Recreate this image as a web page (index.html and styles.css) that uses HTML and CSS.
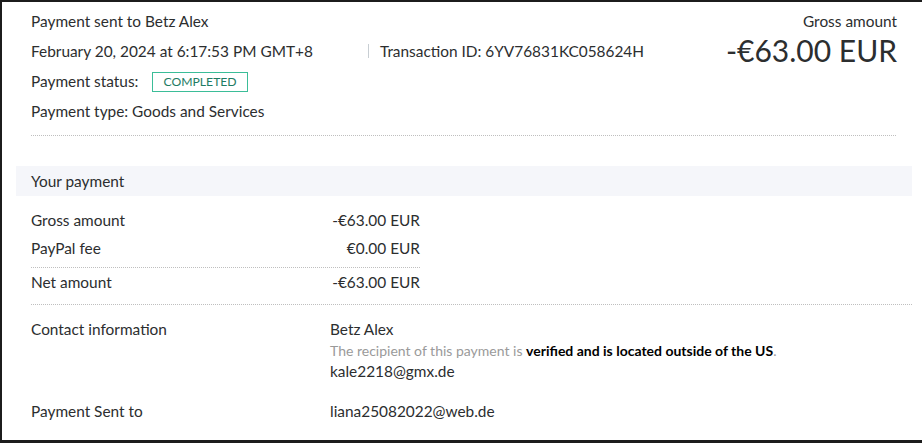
FILE: index.html
```html
<!DOCTYPE html>
<html>
<head>
<meta charset="utf-8">
<link rel="stylesheet" href="styles.css">
</head>
<body>
<div class="card">
  <div class="head">
    <div class="head-left">
      <div class="row">Payment sent to Betz Alex</div>
      <div class="row meta">
        <span class="date">February 20, 2024 at 6:17:53 PM GMT+8</span>
        <span class="sep"></span>
        <span>Transaction ID: 6YV76831KC058624H</span>
      </div>
      <div class="row">Payment status: <span class="badge">COMPLETED</span></div>
      <div class="row">Payment type: Goods and Services</div>
    </div>
    <div class="head-right">
      <div class="gross-label">Gross amount</div>
      <div class="gross-value">-€63.00 EUR</div>
    </div>
  </div>
  <div class="divider top-divider"></div>

  <div class="band">Your payment</div>

  <div class="amounts">
    <div class="amt-row"><span>Gross amount</span><span>-€63.00 EUR</span></div>
    <div class="amt-row"><span>PayPal fee</span><span>€0.00 EUR</span></div>
    <div class="amt-row net"><span>Net amount</span><span>-€63.00 EUR</span></div>
  </div>
  <div class="divider wide-divider"></div>

  <div class="info-row contact">
    <div class="info-label">Contact information</div>
    <div class="info-value">
      <div>Betz Alex</div>
      <div class="note">The recipient of this payment is <b>verified and is located outside of the US</b>.</div>
      <div>kale2218@gmx.de</div>
    </div>
  </div>
  <div class="info-row sent">
    <div class="info-label">Payment Sent to</div>
    <div class="info-value">liana25082022@web.de</div>
  </div>
</div>
</body>
</html>
```
FILE: styles.css
```css
html, body {
  margin: 0;
  padding: 0;
  background: #1c1c1c;
  height: 443px;
  overflow: hidden;
}
.card {
  margin: 2px 0 0 2px;
  height: 438px;
  background: #fff;
  font-family: Lato, "Noto Sans", sans-serif;
  font-size: 15.4px;
  color: #2c2e2f;
  box-sizing: border-box;
  padding-top: 4px;
}
.head {
  display: flex;
  justify-content: space-between;
  padding: 0 25px 0 29px;
}
.row {
  height: 30px;
  line-height: 30px;
  display: flex;
  align-items: center;
  white-space: nowrap;
}
.meta .date { width: 337px; }
.sep {
  width: 1px;
  height: 14px;
  background: #c8ced3;
  margin-right: 11px;
}
.badge {
  display: inline-block;
  margin-left: 14px;
  border: 1px solid #3bbd98;
  color: #1e7c63;
  font-size: 12.2px;
  letter-spacing: 0;
  line-height: 18px;
  padding: 0 10px;
  margin-top: 2px;
}
.head-right {
  text-align: right;
}
.gross-label {
  height: 30px;
  line-height: 30px;
}
.gross-value {
  font-size: 30px;
  line-height: 36px;
  margin-top: -4px;
}
.divider {
  border-top: 1px dotted #bfbfbf;
}
.top-divider {
  margin: 9px 26px 0 29px;
}
.band {
  margin: 30px 10px 0 14px;
  height: 30px;
  line-height: 30px;
  background: #f5f6fa;
  padding-left: 15px;
}
.amounts {
  width: 389px;
  margin: 10px 0 0 29px;
}
.amt-row {
  display: flex;
  justify-content: space-between;
  height: 28px;
  line-height: 28px;
}
.amt-row.net {
  border-top: 1px dotted #bfbfbf;
  margin-top: 5px;
  height: 28px;
}
.wide-divider {
  margin: 8px 10px 0 29px;
}
.info-row {
  display: flex;
  padding-left: 29px;
}
.info-label {
  width: 299px;
}
.contact {
  margin-top: 14px;
  line-height: 21px;
}
.note {
  font-size: 14px;
  color: #9a9a9a;
}
.note b {
  color: #000;
  font-weight: 700;
}
.sent {
  margin-top: 19px;
  line-height: 21px;
}
```
